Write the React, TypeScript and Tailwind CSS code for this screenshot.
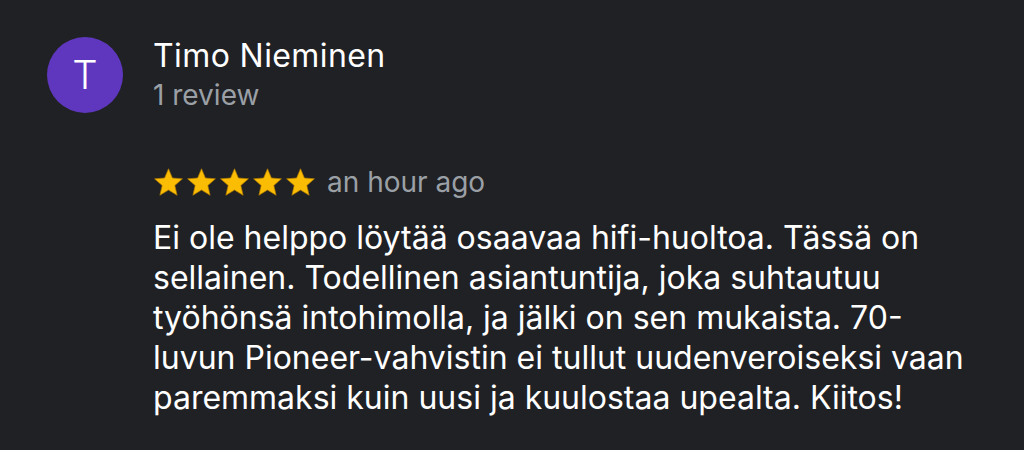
import React from "react";

const Star = () => (
  <svg width="29" height="28" viewBox="1.6 1.6 20.8 19.8" className="block">
    <path
      d="M12 17.27L18.18 21l-1.64-7.03L22 9.24l-7.19-.61L12 2 9.19 8.63 2 9.24l5.46 4.73L5.82 21z"
      fill="#fbbc04"
      stroke="#b07a00"
      strokeWidth="0.5"
      strokeLinejoin="round"
    />
  </svg>
);

const lines = [
  "Ei ole helppo löytää osaavaa hifi-huoltoa. Tässä on",
  "sellainen. Todellinen asiantuntija, joka suhtautuu",
  "työhönsä intohimolla, ja jälki on sen mukaista. 70-",
  "luvun Pioneer-vahvistin ei tullut uudenveroiseksi vaan",
  "paremmaksi kuin uusi ja kuulostaa upealta. Kiitos!",
];

export default function App() {
  return (
    <div className="w-[1024px] h-[450px] bg-[#202124] overflow-hidden" style={{ fontFamily: "Inter, 'Noto Sans', sans-serif" }}>
      <div className="flex pl-[47px] pt-[37px]">
        <div className="w-[76px] h-[76px] rounded-full bg-[#5f37be] flex items-center justify-center text-white text-[40px] font-light leading-none">
          T
        </div>
        <div className="ml-[30px] flex flex-col">
          <div className="text-white text-[32px] leading-[32px] mt-[3px] tracking-[0.4px]">Timo Nieminen</div>
          <div className="text-[#9aa0a6] text-[28px] leading-[28px] mt-[9px]">1 review</div>
        </div>
      </div>
      <div className="pl-[153px] mt-[54px]">
        <div className="flex items-center h-[30px]">
          <div className="flex gap-[4px] pl-[1px]">
            <Star /><Star /><Star /><Star /><Star />
          </div>
          <span className="ml-[12px] text-[#9aa0a6] text-[28px] leading-[30px]">an hour ago</span>
        </div>
        <div className="mt-[21px] text-white text-[32px] leading-[40px]">
          {lines.map((l) => (
            <div key={l} className="whitespace-nowrap">{l}</div>
          ))}
        </div>
      </div>
    </div>
  );
}
